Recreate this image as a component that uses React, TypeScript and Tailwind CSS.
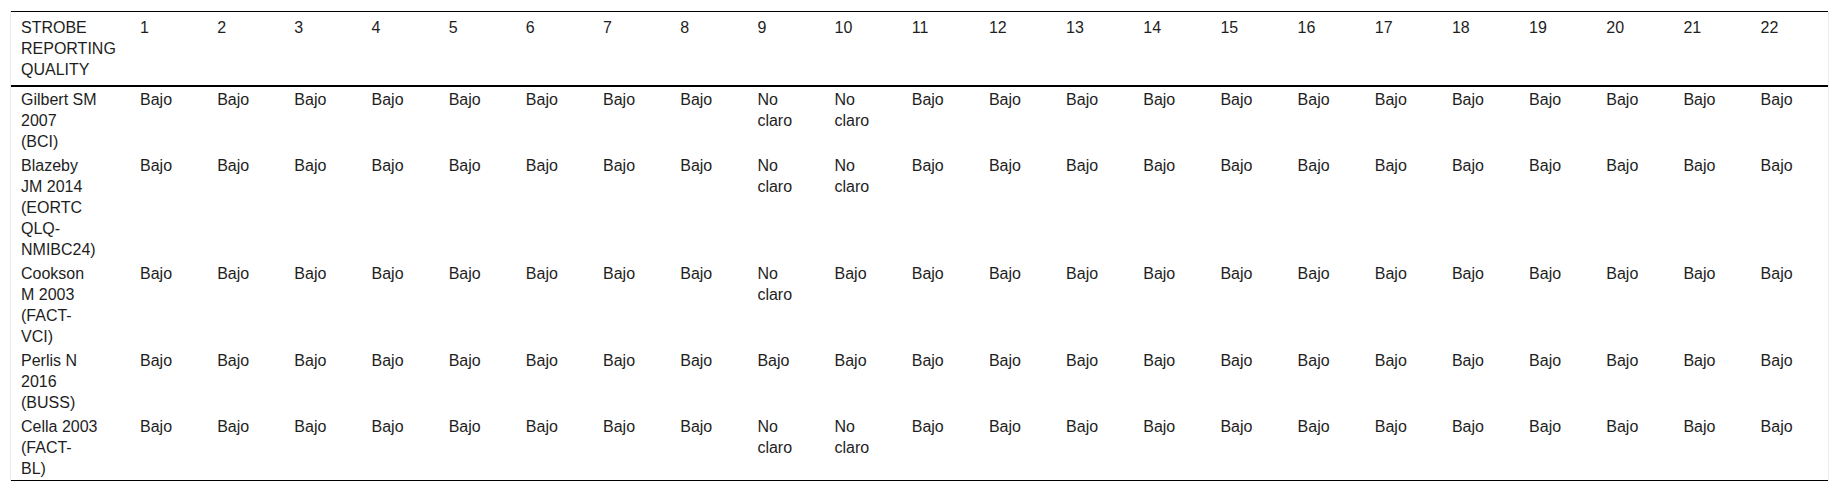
const COLS = Array.from({ length: 22 }, (_, i) => String(i + 1));

const B = "Bajo";
const N = "No claro";

const pattern = (unclear: number[]) =>
  COLS.map((_, i) => (unclear.includes(i + 1) ? N : B));

// label lines follow the wrapping of the original table
const ROWS = [
  { name: ["Gilbert SM", "2007", "(BCI)"], vals: pattern([9, 10]) },
  { name: ["Blazeby", "JM 2014", "(EORTC", "QLQ-", "NMIBC24)"], vals: pattern([9, 10]) },
  { name: ["Cookson", "M 2003", "(FACT-", "VCI)"], vals: pattern([9]) },
  { name: ["Perlis N", "2016", "(BUSS)"], vals: pattern([]) },
  { name: ["Cella 2003", "(FACT-", "BL)"], vals: pattern([9, 10]) },
];

export default function App() {
  return (
    <div className="min-h-screen bg-white pt-[11px] pl-[10px] font-['Liberation_Sans',Arial,sans-serif] text-[16px] leading-[21px] text-[#1e1e1e]">
      <div className="w-[1819px] border-x border-[#ececec]">
        <table className="w-full table-fixed border-collapse border-y border-black">
          <colgroup>
            <col className="w-[119px]" />
            {COLS.map((c) => (
              <col key={c} />
            ))}
          </colgroup>
          <thead>
            <tr className="border-b-2 border-black">
              <th className="pt-[5px] pb-[5px] pl-[10px] pr-[20px] text-left align-top font-normal">
                STROBE
                <br />
                REPORTING
                <br />
                QUALITY
              </th>
              {COLS.map((c) => (
                <th
                  key={c}
                  className="pt-[5px] pb-[5px] pl-[10px] pr-[28px] text-left align-top font-normal"
                >
                  {c}
                </th>
              ))}
            </tr>
          </thead>
          <tbody>
            {ROWS.map((r) => (
              <tr key={r.name.join(" ")}>
                <td className="pt-[2px] pb-[1px] pl-[10px] pr-[20px] align-top whitespace-nowrap">
                  {r.name.map((l, i) => (
                    <div key={i}>{l}</div>
                  ))}
                </td>
                {r.vals.map((v, i) => (
                  <td key={i} className="pt-[2px] pb-[1px] pl-[10px] pr-[28px] align-top">
                    {v}
                  </td>
                ))}
              </tr>
            ))}
          </tbody>
        </table>
      </div>
    </div>
  );
}
